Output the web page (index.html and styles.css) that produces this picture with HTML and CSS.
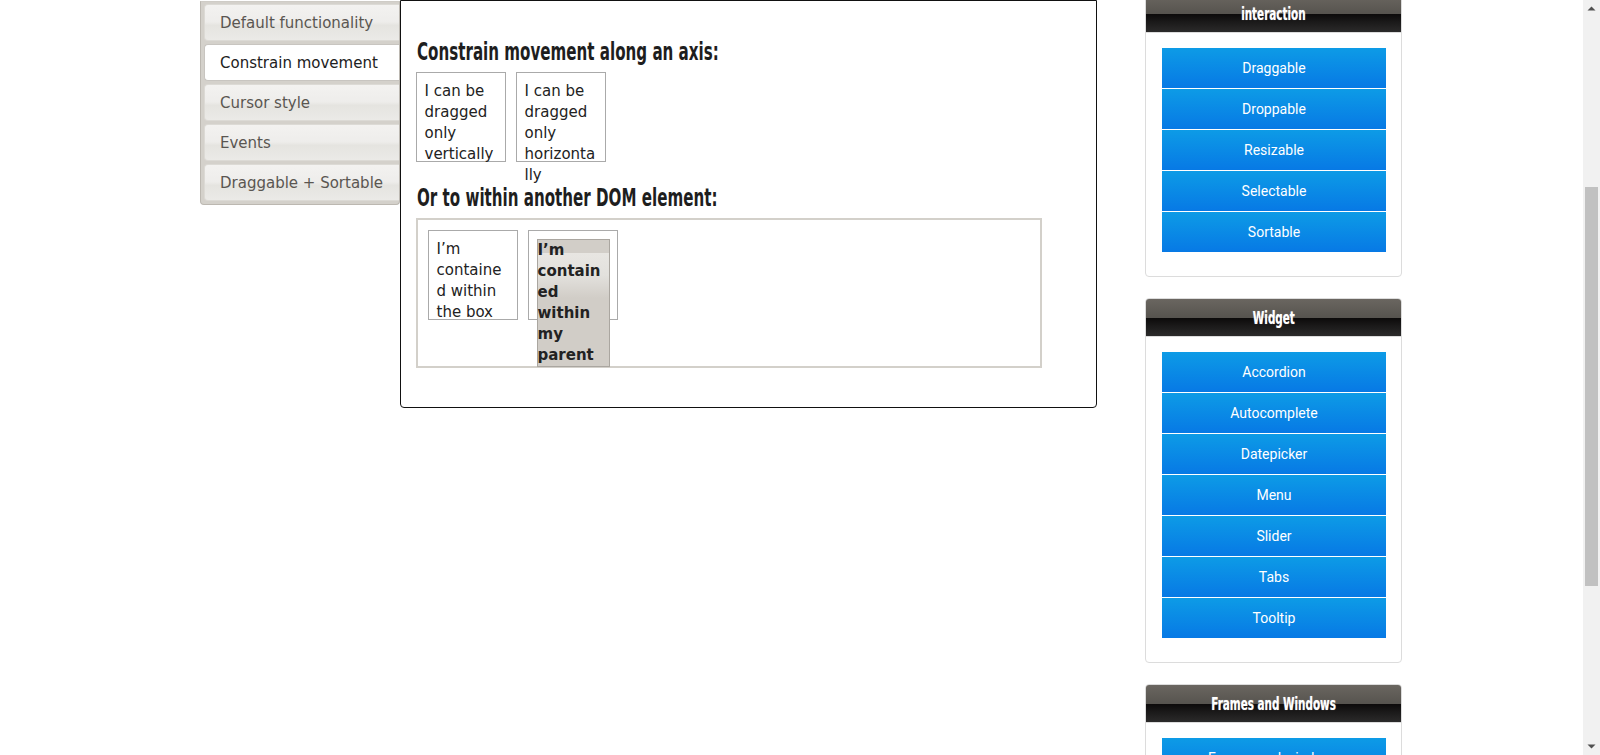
FILE: index.html
```html
<!DOCTYPE html>
<html lang="en">
<head>
<meta charset="utf-8">
<title>Draggable - Constrain movement</title>
<link rel="stylesheet" href="styles.css">
</head>
<body>
<div class="page">
  <nav class="tabs">
    <ul class="tab-list">
      <li class="tab">Default functionality</li>
      <li class="tab active">Constrain movement</li>
      <li class="tab">Cursor style</li>
      <li class="tab">Events</li>
      <li class="tab">Draggable + Sortable</li>
    </ul>
  </nav>
  <main class="demo">
    <h3 class="demo-title"><span class="narrow">Constrain movement along an axis:</span></h3>
    <div class="drag-row">
      <div class="drag-box">I can be dragged only vertically</div>
      <div class="drag-box">I can be dragged only horizontally</div>
    </div>
    <h3 class="demo-title second"><span class="narrow">Or to within another DOM element:</span></h3>
    <div class="containment">
      <div class="drag-box">I’m contained within the box</div>
      <div class="drag-box"><p class="drag-header">I’m contained within my parent</p></div>
    </div>
  </main>
  <aside class="sidebar">
    <section class="panel">
      <h4 class="panel-title"><span class="title-text">interaction</span></h4>
      <div class="panel-body">
        <a class="btn">Draggable</a>
        <a class="btn">Droppable</a>
        <a class="btn">Resizable</a>
        <a class="btn">Selectable</a>
        <a class="btn">Sortable</a>
      </div>
    </section>
    <section class="panel">
      <h4 class="panel-title"><span class="title-text">Widget</span></h4>
      <div class="panel-body">
        <a class="btn">Accordion</a>
        <a class="btn">Autocomplete</a>
        <a class="btn">Datepicker</a>
        <a class="btn">Menu</a>
        <a class="btn">Slider</a>
        <a class="btn">Tabs</a>
        <a class="btn">Tooltip</a>
      </div>
    </section>
    <section class="panel">
      <h4 class="panel-title"><span class="title-text">Frames and Windows</span></h4>
      <div class="panel-body">
        <a class="btn">Frames and windows</a>
      </div>
    </section>
  </aside>
</div>
<div class="scrollbar">
  <div class="sb-arrow"><svg width="9" height="5" viewBox="0 0 9 5"><path d="M0.5 4.5 L4.5 0.5 L8.5 4.5 Z" fill="#505050"/></svg></div>
  <div class="sb-track"><div class="sb-thumb"></div></div>
  <div class="sb-arrow"><svg width="9" height="5" viewBox="0 0 9 5"><path d="M0.5 0.5 L4.5 4.5 L8.5 0.5 Z" fill="#505050"/></svg></div>
</div>
</body>
</html>
```

FILE: styles.css
```css
html, body {
  margin: 0;
  padding: 0;
  height: 755px;
  overflow: hidden;
  background: #fff;
}
body {
  display: flex;
  font-family: "DejaVu Sans", Verdana, sans-serif;
  color: #222;
}
.page {
  flex: 1;
  display: flex;
  align-items: flex-start;
  padding-left: 200px;
}

/* vertical tabs */
.tabs {
  width: 200px;
  box-sizing: border-box;
  margin-top: 1px;
  background: #d4d1cb;
  border: 1px solid #bcb8b1;
  border-top-color: #cfccc6;
  border-radius: 0 0 4px 4px;
}
.tab-list {
  list-style: none;
  margin: 0;
  padding: 2px 0 3px 3px;
  display: flex;
  flex-direction: column;
  gap: 3px;
}
.tab {
  height: 37px;
  box-sizing: border-box;
  display: flex;
  align-items: center;
  padding-left: 15px;
  font-size: 15px;
  color: #5a5651;
  white-space: nowrap;
  border: 1px solid #dcdad5;
  border-right: none;
  border-radius: 4px 0 0 4px;
  background: linear-gradient(#f3f2f0 0%, #eeedeb 48%, #e5e4e0 58%, #ebeae7 100%);
}
.tab.active {
  background: #fff;
  color: #212121;
  border-color: #c8c5c0;
}

/* demo box */
.demo {
  width: 697px;
  box-sizing: border-box;
  padding: 36px 14px 39px 15px;
  border: 1px solid #111;
  border-radius: 0 0 4px 4px;
}
.demo-title {
  margin: 0;
  font-family: "DejaVu Sans Condensed", "Liberation Sans Narrow", "Arial Narrow", sans-serif;
  font-weight: bold;
  font-size: 25px;
  line-height: 30px;
  color: #1e1e1e;
  padding-left: 1px;
  white-space: nowrap;
}
.narrow {
  display: inline-block;
  transform: scaleX(0.672);
  transform-origin: left center;
}
.demo-title.second {
  margin-top: 21px;
}
.drag-row {
  display: flex;
  gap: 10px;
  margin-top: 5px;
}
.drag-box {
  width: 73px;
  height: 73px;
  padding: 7.5px;
  border: 1px solid #aaa;
  font-size: 15px;
  line-height: 21px;
  color: #222;
  overflow-wrap: anywhere;
  flex: none;
}
.containment {
  width: 626px;
  height: 150px;
  box-sizing: border-box;
  margin-top: 5px;
  padding: 10px;
  border: 2px solid #d3d0ca;
  display: flex;
  align-items: flex-start;
  gap: 10px;
}
.drag-header {
  margin: 0;
  border: 1px solid #aaa6a0;
  font-weight: bold;
  color: #222;
  background: linear-gradient(#d2cec8 0, #d2cec8 13px, #e8e6e2 13px, #e3e1dd 35px, #d1cdc7 58px, #d1cdc7 100%);
}

/* sidebar */
.sidebar {
  width: 257px;
  margin-left: 48px;
  margin-top: -6px;
  display: flex;
  flex-direction: column;
  gap: 21px;
}
.panel {
  border: 1px solid #dcdcdc;
  border-radius: 4px;
  background: #fff;
  overflow: hidden;
}
.panel-title {
  margin: 0;
  height: 37px;
  display: flex;
  align-items: center;
  justify-content: center;
  font-family: "DejaVu Sans Condensed", "Liberation Sans Narrow", sans-serif;
  font-weight: bold;
  font-size: 17px;
  color: #fff;
  white-space: nowrap;
  background: linear-gradient(#6a6660 0%, #57544f 50%, #0c0a0a 51%, #1c1b1b 75%, #2b2a2a 100%);
  border-bottom: 1px solid #dcdcdc;
}
.title-text {
  display: inline-block;
  transform: scaleX(0.68);
  text-shadow: 0 0 1px rgba(255,255,255,0.5);
}
.panel-body {
  padding: 15px 15px 24px 16px;
  display: flex;
  flex-direction: column;
  gap: 1px;
}
.btn {
  height: 40px;
  display: flex;
  align-items: center;
  justify-content: center;
  font-family: Roboto, "Liberation Sans", sans-serif;
  font-size: 14px;
  color: #fff;
  background: linear-gradient(#0d9be6, #0779e5);
  text-decoration: none;
}

/* scrollbar */
.scrollbar {
  width: 17px;
  height: 755px;
  background: #f1f1f1;
  display: flex;
  flex-direction: column;
  flex: none;
}
.sb-arrow {
  height: 17px;
  display: flex;
  align-items: center;
  justify-content: center;
}
.sb-track {
  flex: 1;
  padding: 0 2px;
}
.sb-thumb {
  margin-top: 170px;
  height: 399px;
  background: #c1c1c1;
}
```
